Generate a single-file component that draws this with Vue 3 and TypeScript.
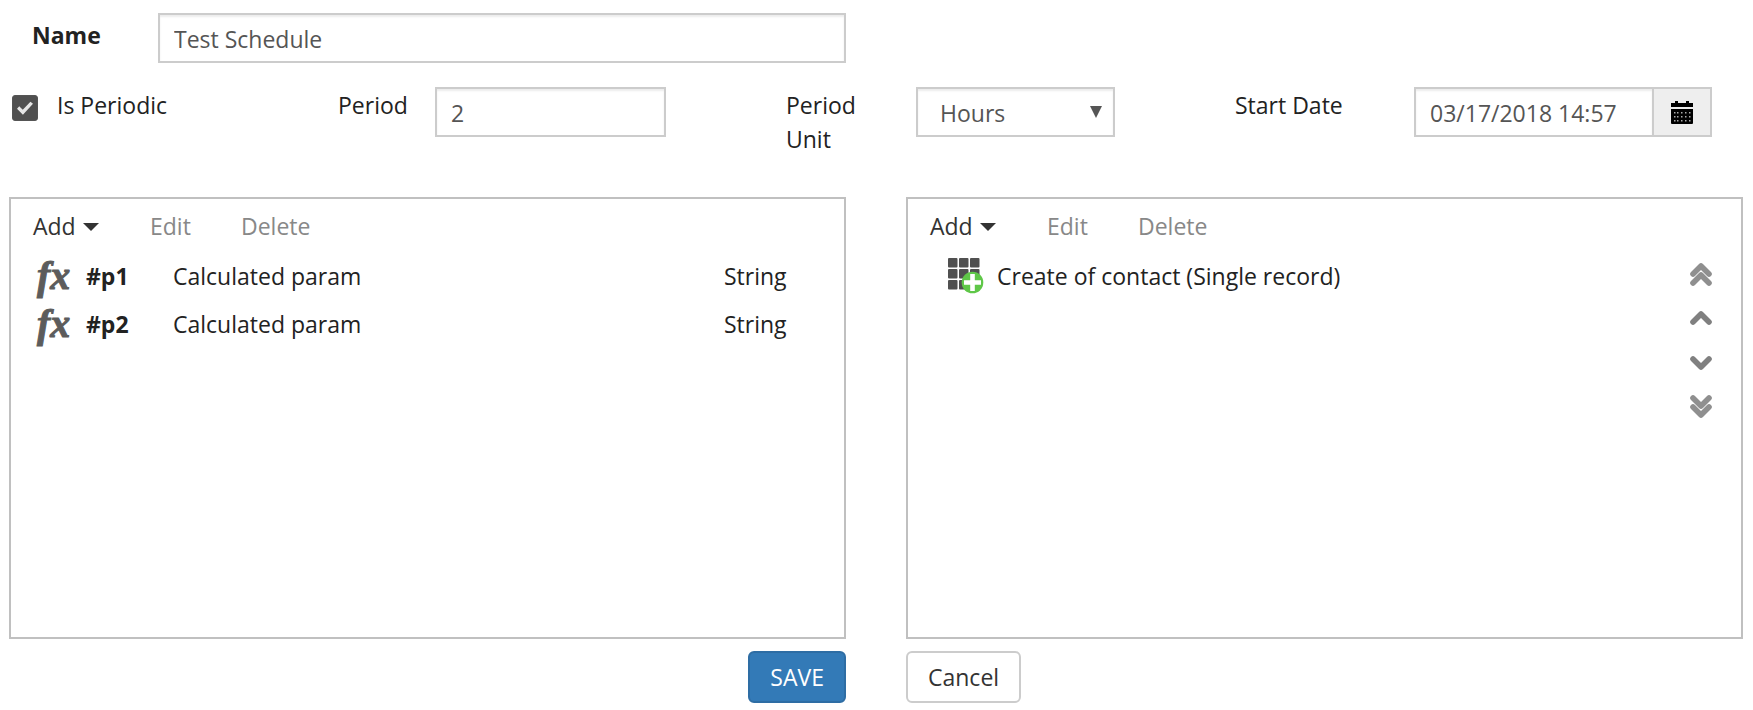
<script setup lang="ts">
import { ref } from 'vue'

interface Param {
  name: string
  kind: string
  type: string
}

const name = ref('Test Schedule')
const isPeriodic = ref(true)
const period = ref('2')
const periodUnit = ref('Hours')
const startDate = ref('03/17/2018 14:57')
const units = ['Minutes', 'Hours', 'Days', 'Weeks', 'Months']

const params: Param[] = [
  { name: '#p1', kind: 'Calculated param', type: 'String' },
  { name: '#p2', kind: 'Calculated param', type: 'String' },
]
const steps = ['Create of contact (Single record)']
const cells = [0, 11, 22]

const moves = [
  { label: 'Move to top', paths: ['M4 13l8-8 8 8', 'M4 22l8-8 8 8'] },
  { label: 'Move up', paths: ['M4 17l8-8 8 8'] },
  { label: 'Move down', paths: ['M4 10l8 8 8-8'] },
  { label: 'Move to bottom', paths: ['M4 5l8 8 8-8', 'M4 14l8 8 8-8'] },
]
</script>

<template>
  <form class="page" @submit.prevent>
    <div class="columns">
      <div class="field name-field">
        <label for="name" class="name-label">Name</label>
        <input id="name" v-model="name" class="control" type="text" />
      </div>
    </div>

    <div class="options">
      <label class="check">
        <input v-model="isPeriodic" type="checkbox" />
        <span>Is Periodic</span>
      </label>
      <div class="field period-field">
        <label for="period">Period</label>
        <input id="period" v-model="period" class="control" type="text" />
      </div>
      <div class="field unit-field">
        <label for="unit">Period Unit</label>
        <div class="select-wrap">
          <select id="unit" v-model="periodUnit" class="control">
            <option v-for="u in units" :key="u">{{ u }}</option>
          </select>
          <svg class="select-arrow" width="12" height="12" viewBox="0 0 12 12" aria-hidden="true">
            <path d="M0 0h12L6 12z" fill="#555" />
          </svg>
        </div>
      </div>
      <div class="field date-field">
        <label for="start">Start Date</label>
        <div class="date-group">
          <input id="start" v-model="startDate" class="control" type="text" />
          <button type="button" class="calendar" aria-label="Choose date">
            <svg width="22" height="24" viewBox="0 0 22 24" aria-hidden="true">
              <path d="M0 3h4V1h3v2h8V1h3v2h4v4H0zM0 9h22v14a1 1 0 0 1-1 1H1a1 1 0 0 1-1-1z" fill="#000" />
              <g fill="#aaa">
                <template v-for="y in [12, 16, 20]" :key="y">
                  <rect v-for="x in [3, 6, 10, 14, 18]" :key="x" :x="x" :y="y" width="1.5" height="1.5" />
                </template>
              </g>
            </svg>
          </button>
        </div>
      </div>
    </div>

    <div class="columns panels">
      <section class="panel" aria-label="Parameters">
        <div class="toolbar">
          <button type="button" class="add">
            Add
            <svg width="16" height="10" viewBox="0 0 16 10" aria-hidden="true"><path d="M0 2h16l-8 8z" fill="#333" /></svg>
          </button>
          <button type="button" class="edit" disabled>Edit</button>
          <button type="button" disabled>Delete</button>
        </div>
        <table class="params">
          <tbody>
            <tr v-for="p in params" :key="p.name">
              <td class="fx-cell"><span class="fx">fx</span></td>
              <th scope="row">{{ p.name }}</th>
              <td>{{ p.kind }}</td>
              <td class="type-cell">{{ p.type }}</td>
            </tr>
          </tbody>
        </table>
      </section>

      <section class="panel" aria-label="Steps">
        <div class="toolbar">
          <button type="button" class="add">
            Add
            <svg width="16" height="10" viewBox="0 0 16 10" aria-hidden="true"><path d="M0 2h16l-8 8z" fill="#333" /></svg>
          </button>
          <button type="button" class="edit" disabled>Edit</button>
          <button type="button" disabled>Delete</button>
        </div>
        <div class="steps-body">
          <ul class="steps">
            <li v-for="s in steps" :key="s">
              <svg width="36" height="36" viewBox="0 0 36 36" aria-hidden="true">
                <g fill="#505050">
                  <template v-for="y in cells" :key="y">
                    <rect v-for="x in cells" :key="x" :x="x" :y="y" width="9.5" height="9.5" rx="1" />
                  </template>
                </g>
                <circle cx="24.5" cy="24.5" r="10.8" fill="#5fc748" />
                <path d="M24.5 16v17M16 24.5h17" stroke="#fff" stroke-width="4.6" />
              </svg>
              <span>{{ s }}</span>
            </li>
          </ul>
          <div class="moves">
            <button v-for="m in moves" :key="m.label" type="button" :aria-label="m.label">
              <svg width="24" height="27" viewBox="0 0 24 27" fill="none" stroke-linecap="round" stroke-linejoin="round" aria-hidden="true">
                <path v-for="d in m.paths" :key="d" :d="d" :stroke="m.paths.length > 1 ? '#8f8f8f' : '#808080'" stroke-width="5.6" />
              </svg>
            </button>
          </div>
        </div>
      </section>
    </div>

    <div class="columns actions">
      <div class="save-cell"><button type="submit" class="btn primary">SAVE</button></div>
      <div><button type="button" class="btn">Cancel</button></div>
    </div>
  </form>
</template>

<style>
body {
  background: #fff;
}
</style>

<style scoped>
.page {
  box-sizing: border-box;
  padding: 13px 10px 7px 9px;
  color: #222;
  font-family: "Open Sans", "Noto Sans", sans-serif;
  font-size: 23px;
  line-height: 34px;
}
.page *,
.page *::before {
  box-sizing: border-box;
}
button,
input,
select {
  margin: 0;
  color: inherit;
  font: inherit;
}
button {
  padding: 0;
  border: 0;
  background: none;
  cursor: pointer;
}
svg {
  display: block;
  flex: none;
}
.columns {
  display: grid;
  grid-template-columns: 1fr 1fr;
  column-gap: 60px;
}
.field {
  display: flex;
  align-items: flex-start;
}
.field > label {
  flex: none;
  padding-top: 1px;
}
.control {
  width: 100%;
  min-width: 0;
  height: 50px;
  padding: 2px 14px 0;
  border: 2px solid #ccc;
  border-radius: 0;
  outline: 0;
  background: #fff;
  color: #555;
  box-shadow: inset 0 2px 2px rgba(0, 0, 0, 0.075);
}
.name-field .name-label {
  width: 149px;
  padding-top: 5px;
  padding-left: 23px;
  font-weight: 700;
}
.options {
  display: grid;
  grid-template-columns: 329fr 448fr 449fr 508fr;
  min-height: 134px;
  padding-top: 24px;
}
.check {
  display: flex;
  align-items: flex-start;
  gap: 19px;
  padding-top: 1px;
  padding-left: 3px;
}
.check input {
  display: grid;
  flex: none;
  place-items: center;
  width: 26px;
  height: 26px;
  margin-top: 7px;
  border: 1px solid #555;
  border-radius: 3px;
  appearance: none;
  background: #fff;
}
.check input:checked {
  background: #505050;
}
.check input:checked::before {
  width: 16px;
  height: 14px;
  background: #e6e6e6;
  clip-path: polygon(0 55%, 14% 38%, 36% 62%, 84% 6%, 100% 20%, 37% 98%);
  content: "";
}
.period-field {
  padding-right: 120px;
}
.period-field label {
  width: 97px;
}
.unit-field {
  padding-right: 120px;
}
.unit-field label {
  width: 130px;
  padding-right: 30px;
}
.select-wrap {
  position: relative;
  flex: 1;
}
.select-wrap .control {
  padding: 2px 22px 0;
  appearance: none;
}
.select-arrow {
  position: absolute;
  top: 19px;
  right: 13px;
  pointer-events: none;
}
.date-field {
  padding-right: 31px;
}
.date-field label {
  width: 179px;
}
.date-group {
  display: flex;
  flex: 1;
  min-width: 0;
}
.date-group .control {
  flex: 1;
}
.calendar {
  display: grid;
  flex: none;
  place-items: center;
  width: 58px;
  height: 50px;
  border: 2px solid #ccc;
  border-left: 0;
  background: #eee;
}
.panel {
  min-height: 442px;
  border: 2px solid #c0c0c0;
}
.toolbar {
  display: flex;
  padding: 10px 0 9px 22px;
}
.toolbar button {
  color: #333;
}
.toolbar button:disabled {
  color: #888;
}
.toolbar .add {
  display: flex;
  align-items: center;
  gap: 7px;
  width: 117px;
}
.toolbar .edit {
  width: 91px;
  text-align: left;
}
.params {
  width: 100%;
  border-collapse: collapse;
  table-layout: fixed;
}
.params tr {
  height: 48px;
}
.params td,
.params th {
  padding: 0;
  text-align: left;
}
.params .fx-cell {
  width: 75px;
  padding-left: 26px;
}
.params th {
  width: 87px;
}
.params .type-cell {
  width: 120px;
}
.fx {
  display: block;
  color: #5c5c5c;
  font: italic 700 40px/32px "Liberation Serif", serif;
  -webkit-text-stroke: 1px #5c5c5c;
}
.steps-body {
  display: flex;
  justify-content: space-between;
}
.steps {
  margin: 0;
  padding: 0 0 0 40px;
  list-style: none;
}
.steps li {
  display: flex;
  align-items: center;
  gap: 13px;
  height: 48px;
}
.moves {
  display: flex;
  flex-direction: column;
  gap: 17px;
  padding: 9px 28px 0 0;
}
.actions {
  padding-top: 12px;
}
.save-cell {
  display: flex;
  justify-content: flex-end;
}
.btn {
  display: block;
  height: 52px;
  padding: 0 20px;
  border: 2px solid #ccc;
  border-radius: 6px;
  background: #fff;
  color: #333;
}
.btn.primary {
  border-color: #2e6da4;
  background: #337ab7;
  color: #fff;
}
</style>
